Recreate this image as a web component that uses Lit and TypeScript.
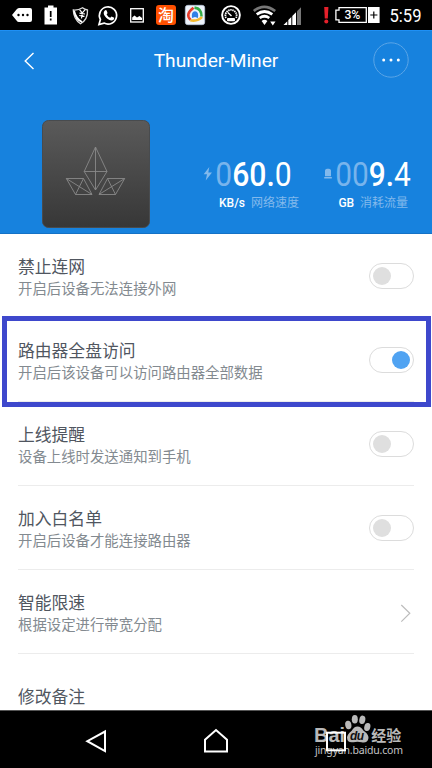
import { LitElement, html, css, svg, nothing } from "lit";
import { customElement, property } from "lit/decorators.js";
import { classMap } from "lit/directives/class-map.js";

interface Setting {
  title: string;
  note?: string;
  kind: "switch" | "link" | "plain";
  on?: boolean;
  marked?: boolean;
}

const SETTINGS: Setting[] = [
  { title: "禁止连网", note: "开启后设备无法连接外网", kind: "switch" },
  { title: "路由器全盘访问", note: "开启后该设备可以访问路由器全部数据", kind: "switch", on: true, marked: true },
  { title: "上线提醒", note: "设备上线时发送通知到手机", kind: "switch" },
  { title: "加入白名单", note: "开启后设备才能连接路由器", kind: "switch" },
  { title: "智能限速", note: "根据设定进行带宽分配", kind: "link" },
  { title: "修改备注", kind: "plain" },
];

@customElement("status-bar")
export class StatusBar extends LitElement {
  static styles = css`
    :host { display: block; height: 30px; background: #000; }
    .bar { display: block; }
    .small { font: 500 12px Roboto, sans-serif; fill: #fff; }
    .clock { font: 400 18.5px Roboto, sans-serif; fill: #fff; }
    .app { font: 500 16px "Noto Sans CJK SC", sans-serif; fill: #fff; }
  `;
  render() {
    return html`<svg class="bar" width="432" height="30" viewBox="0 0 432 30">
      <path d="M12 15 L16.5 9.5 Q17.5 8 19 8 H30 Q32 8 32 10 V20 Q32 22 30 22 H19 Q17.5 22 16.5 20.5Z" fill="#fff"/>
      <g fill="#000"><circle cx="18.5" cy="15" r="1.2"/><circle cx="23" cy="15" r="1.2"/><circle cx="27.5" cy="15" r="1.2"/></g>
      <path d="M44.5 7.5 H48 V5.5 H53.5 V7.5 H57 V24.5 H44.5Z" fill="#fff"/>
      <path d="M50.7 11 V17 M50.7 18.6 V20.6" stroke="#000" stroke-width="1.7"/>
      <path d="M73.3 10 Q78 10.5 82.5 7.8 Q84.5 9.5 87.5 10 Q88 19.5 80.5 23.8 Q73.5 19 73.3 10Z" fill="none" stroke="#ddd" stroke-width="1.3"/>
      <path d="M74.2 11 Q76 18.5 82 22 Q75.5 20 74.2 11Z" fill="#fff" stroke="#fff" stroke-width="1.6"/>
      <path d="M79.5 9.6 L82.3 12.8 L85 9.8 M82.3 12.8 L81.5 18.5 M79.5 13.2 L85 14 M79.2 15.5 L84.5 16.3" fill="none" stroke="#fff" stroke-width="1.2"/>
      <path d="M99 24.5 L100.4 19.5 A8.6 8.6 0 1 1 104 23.1Z" fill="none" stroke="#fff" stroke-width="1.7"/>
      <path d="M104.8 10.4 Q106.2 9.5 106.8 11 L107.5 13 Q107.3 13.8 106.6 14.4 Q107.9 16.8 110.3 17.7 L111.5 16.5 L114.2 17.8 Q114.2 20.5 111.3 20.4 Q107.5 20 104.8 16 Q102.6 12.8 104.8 10.4Z" fill="#fff"/>
      <rect x="130.7" y="8.7" width="12.6" height="13.3" fill="none" stroke="#fff" stroke-width="1.3"/>
      <path d="M132.2 20 V17.5 L134.5 15.5 L137 17.5 L139.5 16 L142 18 V20Z" fill="#fff"/>
      <rect x="156" y="5" width="20" height="20" rx="3" fill="#ff5000"/>
      <text class="app" x="158" y="21">淘</text>
      <rect x="185.3" y="5.3" width="19.4" height="19.4" rx="2.5" fill="#edf3fb" stroke="#b9c6dc" stroke-width=".7"/>
      <g fill="none" stroke-width="2.6">
        <path d="M194.5 7.6 Q201.8 8.5 201.5 16.5" stroke="#35ad48"/>
        <path d="M202 17 Q198 21.6 190.3 20.3" stroke="#f4b92c"/>
        <path d="M190.5 19.8 Q184.8 14.5 193.5 7.8" stroke="#e63c2c"/>
      </g>
      <path d="M192 18 Q191 11.2 195 11.2 Q199 11.2 198 18 L195 17Z" fill="#2f80e6"/>
      <circle cx="231" cy="15" r="8.9" fill="none" stroke="#fff" stroke-width="1.9"/>
      <path d="M226 18 A5.6 5.6 0 1 1 236 18" fill="none" stroke="#fff" stroke-width="1.8" stroke-dasharray="1.5 .6"/>
      <path d="M231.5 16 L227.8 12.5" stroke="#fff" stroke-width="1.4"/>
      <rect x="227" y="18" width="8" height="3.2" rx="1" fill="#fff"/>
      <g fill="none" stroke-width="2.7">
        <path d="M253.8 11 Q264 2.8 275.2 11" stroke="#777"/>
        <path d="M256.7 14.4 Q264.5 8.6 272.3 14.4" stroke="#fff"/>
        <path d="M259.7 18 Q264.5 14.5 269.3 18" stroke="#fff"/>
      </g>
      <path d="M261.6 21 Q264.5 18.5 267.4 21 L264.5 25Z M270.2 21.5 H275.5 L272.8 25.5Z" fill="#fff"/>
      <g fill="#fff"><path d="M283.5 25 L287.3 21.2 V25Z M288.3 20 L291.3 17 V25 H288.3Z M292.3 16 L296 12.3 V25 H292.3Z"/><path d="M297 11.3 L301 7.3 V25 H297Z" fill="#777"/></g>
      <path d="M324.2 7 H328.4 L327.8 18.5 H324.8Z" fill="#e5202b"/><circle cx="326.3" cy="21.4" r="2" fill="#e5202b"/>
      <path d="M339 7.7 H366.3 V22.3 H339 V19.8 H335.9 V10.2 H339Z" fill="none" stroke="#fff" stroke-width="1.3"/>
      <text class="small" x="344.4" y="19.2" textLength="16" lengthAdjust="spacingAndGlyphs">3%</text>
      <rect x="368" y="7" width="11.6" height="16" fill="#fff"/>
      <path d="M370.3 15 H377.4 M373.8 11.4 V18.6" stroke="#000" stroke-width="1.2"/>
      <text class="clock" x="389.5" y="21.8" textLength="32" lengthAdjust="spacingAndGlyphs">5:59</text>
    </svg>`;
  }
}

@customElement("device-header")
export class DeviceHeader extends LitElement {
  static styles = css`
    :host { display: block; box-sizing: border-box; height: 204px; background: #1782de; border-top: 1px solid #1e90f5; border-bottom: 1px solid #1472c6; }
    .top { display: grid; grid-template-columns: 60px 1fr 60px; align-items: center; height: 59px; }
    .back { margin-left: 22px; }
    .name { text-align: center; color: #fff; font: 400 19.2px/24px Roboto, sans-serif; }
    .more { justify-self: start; margin-left: 1px; }
    .body { display: flex; align-items: flex-start; padding: 30px 0 0 42px; }
    .device, .stats { display: block; }
    .pale { fill: #82b9ec; }
    .num { font: 400 32.5px Roboto, sans-serif; fill: #fff; }
    .num .pale { fill: #78b4ec; }
    .bold { font-weight: 500; }
    .unit { font: 500 12px Roboto, sans-serif; fill: #fff; }
    .label { font: 400 12px "Noto Sans CJK SC", sans-serif; fill: #82b9ec; }
  `;
  private reading(x: number, width: number, lead: string, whole: string, tenth: string) {
    return svg`<text class="num" x=${x} y="66.2" textLength=${width} lengthAdjust="spacingAndGlyphs"><tspan class="pale">${lead}</tspan><tspan class="bold">${whole}.</tspan><tspan>${tenth}</tspan></text>`;
  }
  render() {
    return html`
      <div class="top">
        <svg class="back" width="16" height="20" viewBox="0 0 16 20"><path d="M11.5 2 L3.2 10 L11.5 18" fill="none" stroke="#fff" stroke-width="1.4"/></svg>
        <div class="name">Thunder-Miner</div>
        <svg class="more" width="38" height="38" viewBox="0 0 38 38"><circle cx="18" cy="18" r="17.2" fill="none" stroke="#5aa5e7"/><g fill="#fff"><circle cx="10.7" cy="18" r="1.5"/><circle cx="18" cy="18" r="1.5"/><circle cx="25.3" cy="18" r="1.5"/></g></svg>
      </div>
      <div class="body">
        <svg class="device" width="108" height="108" viewBox="0 0 108 108">
          <defs><linearGradient id="shell" x2="0" y2="1"><stop stop-color="#5a5a5a"/><stop offset="1" stop-color="#373737"/></linearGradient></defs>
          <rect x=".5" y=".5" width="107" height="107" rx="6" fill="url(#shell)" stroke="#484b4e"/>
          <g fill="none" stroke="#898989" stroke-width=".9">
            <path d="M53.5 27 L65 51.5 L53.5 70 L42.2 51.5Z M53.5 27 V70 M42.2 51.5 H65"/>
            <path d="M24.3 58.5 H41.5 L50 74.5 H33.5Z M24.3 58.5 L50 74.5 M41.5 58.5 L33.5 74.5"/>
            <path d="M82.7 58.5 H65.5 L57 74.5 H73.5Z M82.7 58.5 L57 74.5 M65.5 58.5 L73.5 74.5"/>
          </g>
        </svg>
        <svg class="stats" width="282" height="108" viewBox="150 120 282 108">
          <g transform="translate(0 120)">
            <path class="pale" d="M209.3 47 L203.7 54.3 H207 L205.7 60.5 L212 52.5 H208.3Z"/>
            ${this.reading(215.3, 76.5, "0", "60", "0")}
            <path class="pale" d="M325 56.3 V50.4 Q325.3 48.8 327 48.8 H329 Q330.7 48.8 331 50.4 V56.3Z M324.2 57 H331.8 V58.6 H324.2Z"/>
            ${this.reading(335.3, 75.6, "00", "9", "4")}
            <text class="unit" x="219" y="86.8" textLength="26">KB/s</text>
            <text class="label" x="251" y="87" textLength="48">网络速度</text>
            <text class="unit" x="338.5" y="86.8" textLength="15.5">GB</text>
            <text class="label" x="360" y="87" textLength="48">消耗流量</text>
          </g>
        </svg>
      </div>`;
  }
}

@customElement("setting-row")
export class SettingRow extends LitElement {
  @property({ attribute: false }) setting!: Setting;
  static styles = css`
    :host { display: block; position: relative; height: 84px; }
    .row { display: flex; justify-content: space-between; box-sizing: border-box; height: 84px; margin: 0 18px; padding-top: 20px; border-bottom: 1px solid #ececec; font-family: "Noto Sans CJK SC", sans-serif; }
    .plain { padding-top: 30px; border: 0; }
    .title { font-size: 16.8px; line-height: 24px; color: #50565f; white-space: nowrap; }
    .note { font-size: 14.4px; line-height: 20px; color: #838a90; white-space: nowrap; }
    .switch { display: flex; align-items: center; box-sizing: border-box; width: 45px; height: 26px; margin-top: 9px; padding: 0 3px; border: 1px solid #dcdcdc; border-radius: 13px; }
    .knob { width: 18px; height: 18px; border-radius: 50%; background: #dfdfdf; }
    .on { justify-content: flex-end; }
    .on .knob { background: #50a3f2; }
    .arrow { margin: 13px 2px 0 0; }
    .mark { position: absolute; z-index: 1; left: 2px; top: -2px; width: 429px; height: 91px; box-sizing: border-box; border: 5px solid #3e48cc; }
  `;
  render() {
    const s = this.setting;
    return html`
      <div class=${classMap({ row: true, plain: s.kind === "plain" })}>
        <div>
          <div class="title">${s.title}</div>
          ${s.note ? html`<div class="note">${s.note}</div>` : nothing}
        </div>
        ${s.kind === "switch" ? html`<div class=${classMap({ switch: true, on: !!s.on })}><div class="knob"></div></div>` : nothing}
        ${s.kind === "link" ? html`<svg class="arrow" width="12" height="20" viewBox="0 0 12 20"><path d="M1.3 2 L9.8 10.3 L1.3 18.6" fill="none" stroke="#bcbcbc" stroke-width="1.2"/></svg>` : nothing}
      </div>
      ${s.marked ? html`<div class="mark"></div>` : nothing}`;
  }
}

@customElement("nav-bar")
export class NavBar extends LitElement {
  static styles = css`
    :host { display: block; box-sizing: border-box; height: 58px; background: #000; border-top: 1px solid #555; }
    .bar { display: block; }
    .brand { font: 700 20px "Liberation Sans", sans-serif; fill: #b9b9b9; }
    .du { font: italic 700 12px "Liberation Sans", sans-serif; fill: #111; }
    .cn { font: 700 15px "Noto Sans CJK SC", sans-serif; fill: #b9b9b9; }
    .site { font: 400 10.5px "Noto Sans", sans-serif; fill: #c4c4c4; }
  `;
  render() {
    return html`<svg class="bar" width="432" height="57" viewBox="0 711 432 57">
      <g fill="none" stroke="#fff" stroke-width="2">
        <path d="M105 731.5 V751 L87.3 741.2Z"/>
        <path d="M205 751.5 V739.7 L216 730 L227 739.7 V751.5Z"/>
      </g>
      <text class="brand" x="314" y="742" textLength="31" lengthAdjust="spacingAndGlyphs">Bai</text>
      <g fill="#b9b9b9">
        <ellipse cx="348.3" cy="725" rx="3.1" ry="4.2" transform="rotate(-10 348.3 725)"/>
        <ellipse cx="354.8" cy="719.3" rx="3" ry="4.3"/>
        <ellipse cx="362.3" cy="719.8" rx="3" ry="4.2" transform="rotate(12 362.3 719.8)"/>
        <ellipse cx="367.3" cy="727" rx="3" ry="4.1" transform="rotate(15 367.3 727)"/>
        <path d="M357.5 726.5 Q361 726.5 363.3 730.5 Q369 734.5 368.4 738.5 Q367.5 743.3 361.5 742.2 Q357.5 741.3 353.5 742.2 Q347.2 743.2 347 737.5 Q347.2 734.5 351.7 730.8 Q354 726.5 357.5 726.5Z"/>
      </g>
      <text class="du" x="350" y="740" textLength="14">du</text>
      <text class="cn" x="371.3" y="740.5" textLength="30">经验</text>
      <text class="site" x="315" y="753.8" textLength="88">jingyan.baidu.com</text>
      <rect x="327" y="732.7" width="18" height="17.6" fill="none" stroke="#fff" stroke-width="2"/>
    </svg>`;
  }
}

@customElement("app-root")
export class AppRoot extends LitElement {
  static styles = css`
    :host { display: flex; flex-direction: column; width: 432px; height: 768px; overflow: hidden; background: #fff; }
    .list { flex: 1; min-height: 0; overflow: hidden; }
    status-bar, device-header, nav-bar { flex: none; }
  `;
  render() {
    return html`
      <status-bar></status-bar>
      <device-header></device-header>
      <div class="list">${SETTINGS.map((s) => html`<setting-row .setting=${s}></setting-row>`)}</div>
      <nav-bar></nav-bar>`;
  }
}
